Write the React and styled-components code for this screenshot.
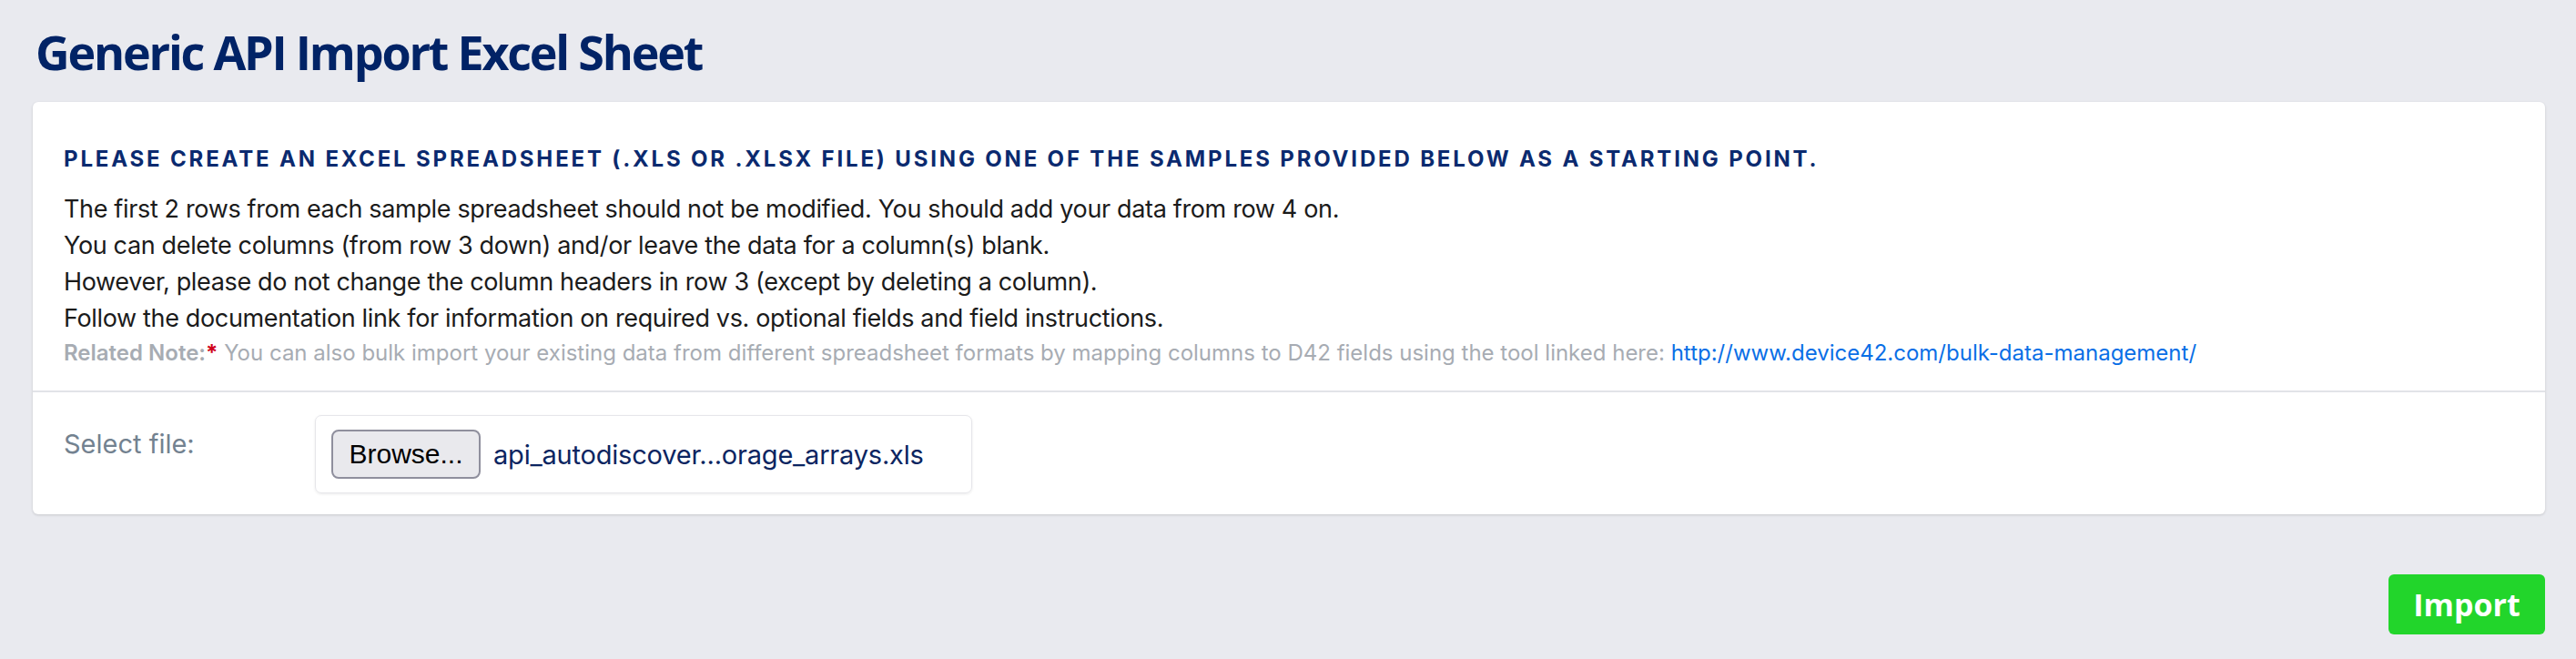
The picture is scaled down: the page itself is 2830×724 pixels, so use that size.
import React from 'react';
import styled, { createGlobalStyle } from 'styled-components';

// Page-wide reset and background
const GlobalStyle = createGlobalStyle`
  body {
    margin: 0;
    background: #e9eaef;
    font-family: 'Inter', 'Noto Sans', sans-serif;
  }
`;

const Page = styled.div`
  width: 2830px;
  box-sizing: border-box;
  padding: 0 34px 0 36px;
  display: flex;
  flex-direction: column;
`;

const Header = styled.div`
  height: 112px;
  display: flex;
  align-items: center;
`;

const Title = styled.h1`
  margin: 0 0 0 3px;
  font-family: 'Open Sans', sans-serif;
  font-weight: 700;
  font-size: 52px;
  letter-spacing: -2.2px;
  color: #012366;
`;

// White card that holds the instructions and the file picker
const Card = styled.div`
  background: #fff;
  border-radius: 6px;
  box-shadow: 0 1px 3px rgba(0, 0, 0, 0.15);
`;

const Section = styled.div`
  padding: ${(p) => p.$pad};
  border-top: ${(p) => (p.$divided ? '2px solid #e2e3e8' : 'none')};
`;

const Heading = styled.h4`
  margin: 0 0 17px;
  font-size: 24px;
  line-height: 36px;
  font-weight: 700;
  letter-spacing: 2.83px;
  text-transform: uppercase;
  color: #0b2a6f;
`;

const Line = styled.p`
  margin: 0;
  font-size: 27px;
  line-height: 40px;
  letter-spacing: -0.35px;
  color: #1b1b1b;
`;

const Note = styled.p`
  margin: 0;
  font-size: 24px;
  line-height: 36px;
  color: #a7acb3;
`;

const NoteLabel = styled.span`
  font-weight: 600;
`;

const Star = styled.span`
  color: #d0021b;
  font-weight: 700;
`;

const Link = styled.a`
  color: #0a6fe6;
  text-decoration: none;
`;

const FileRow = styled.div`
  display: grid;
  grid-template-columns: 276px 722px;
  align-items: start;
`;

const Label = styled.label`
  padding-top: 12px;
  font-size: 29px;
  line-height: 40px;
  color: #738290;
`;

const FileBox = styled.div`
  height: 86px;
  box-sizing: border-box;
  display: flex;
  align-items: center;
  gap: 14px;
  padding: 0 17px;
  border: 1px solid #e6e6ea;
  border-radius: 7px;
  box-shadow: 0 1px 3px rgba(0, 0, 0, 0.08);
`;

const BrowseButton = styled.button`
  flex-shrink: 0;
  width: 164px;
  height: 54px;
  box-sizing: border-box;
  border: 2px solid #8f8f9d;
  border-radius: 8px;
  background: #e9e9ed;
  font-family: 'Liberation Sans', Arial, sans-serif;
  font-size: 30px;
  color: #000;
  padding: 0;
`;

const FileName = styled.span`
  font-size: 29px;
  letter-spacing: -0.2px;
  white-space: nowrap;
  color: #0b2561;
`;

const Footer = styled.div`
  display: flex;
  justify-content: flex-end;
  padding-top: 66px;
`;

const ImportButton = styled.button`
  width: 172px;
  height: 66px;
  border: none;
  border-radius: 6px;
  background: #22d52b;
  color: #fff;
  font-family: 'Open Sans', sans-serif;
  font-weight: 700;
  font-size: 34px;
`;

const lines = [
  'The first 2 rows from each sample spreadsheet should not be modified. You should add your data from row 4 on.',
  'You can delete columns (from row 3 down) and/or leave the data for a column(s) blank.',
  'However, please do not change the column headers in row 3 (except by deleting a column).',
  'Follow the documentation link for information on required vs. optional fields and field instructions.',
];

const App = () => (
  <>
    <GlobalStyle />
    <Page>
      <Header>
        <Title>Generic API Import Excel Sheet</Title>
      </Header>
      <Card>
        <Section $pad="45px 34px 23px">
          <Heading>
            Please create an Excel spreadsheet (.xls or .xlsx file) using one of the samples provided below as a starting point.
          </Heading>
          {lines.map((l) => (
            <Line key={l}>{l}</Line>
          ))}
          <Note>
            <NoteLabel>Related Note:</NoteLabel>
            <Star>*</Star> You can also bulk import your existing data from different spreadsheet formats by mapping columns to D42 fields using the tool linked here:{' '}
            <Link href="#">http://www.device42.com/bulk-data-management/</Link>
          </Note>
        </Section>
        <Section $divided $pad="25px 34px 23px">
          <FileRow>
            <Label>Select file:</Label>
            <FileBox>
              <BrowseButton>Browse...</BrowseButton>
              <FileName>api_autodiscover...orage_arrays.xls</FileName>
            </FileBox>
          </FileRow>
        </Section>
      </Card>
      <Footer>
        <ImportButton>Import</ImportButton>
      </Footer>
    </Page>
  </>
);

export default App;
